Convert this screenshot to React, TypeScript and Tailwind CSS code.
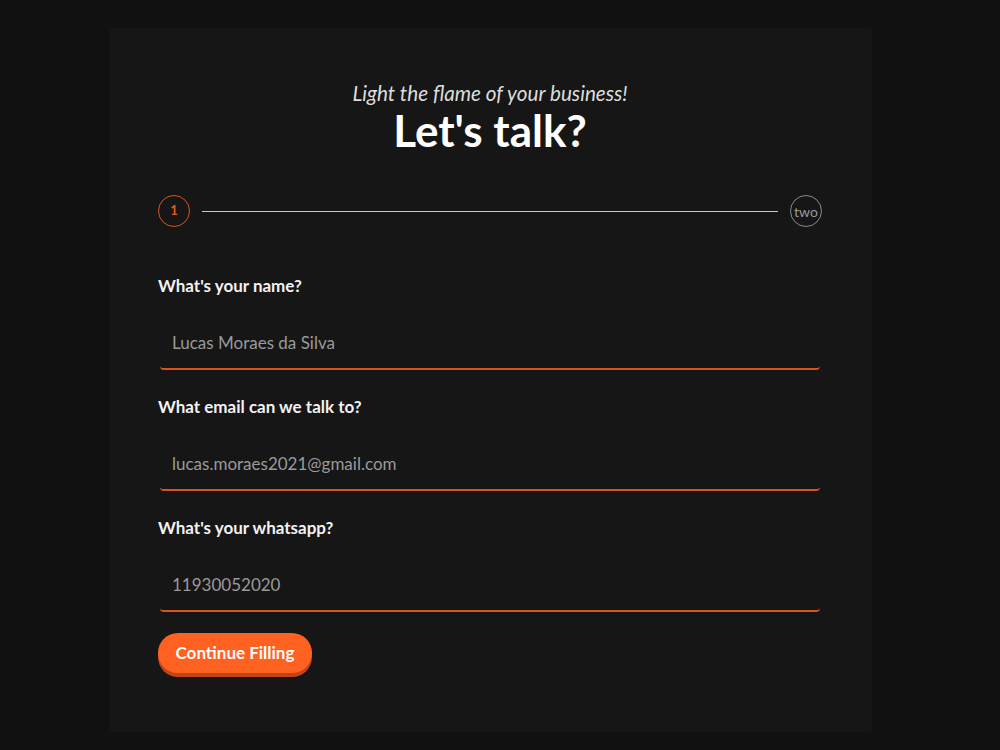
import React from "react";

const fields = [
  { label: "What's your name?", value: "Lucas Moraes da Silva" },
  { label: "What email can we talk to?", value: "lucas.moraes2021@gmail.com" },
  { label: "What's your whatsapp?", value: "11930052020" },
];

export default function App() {
  return (
    <div
      className="min-h-[750px] w-full bg-[#111111] pt-[28px] pb-[18px]"
      style={{ fontFamily: "Lato, 'Open Sans', sans-serif" }}
    >
      <div className="ml-[110px] w-[762px] h-[704px] rounded-[4px] bg-[#161616] pl-[48px] pr-[50px] pt-[53px]">
        <div className="flex flex-col items-center">
          <p className="text-[20.7px] leading-[24px] italic text-[#dddddd]">
            Light the flame of your business!
          </p>
          <h1 className="text-[44px] leading-[50px] font-bold text-white">Let's talk?</h1>
        </div>

        <div className="mt-[40px] flex items-center">
          <div className="flex h-[32px] w-[32px] items-center justify-center rounded-full border-[1.5px] border-[#d9531e] text-[13px] font-bold text-[#e05a22]">
            1
          </div>
          <div className="mx-[12px] h-px flex-1 bg-[#c7c7c7]" />
          <div className="flex h-[32px] w-[32px] items-center justify-center rounded-full border-[1.5px] border-[#8a8a8a] text-[14px] text-[#9a9a9a]">
            two
          </div>
        </div>

        <form className="mt-[50px] flex flex-col">
          {fields.map((f, i) => (
            <div key={f.label} className={i > 0 ? "mt-[28px]" : ""}>
              <label className="block text-[17px] leading-[18px] font-bold text-[#f2f2f2]">
                {f.label}
              </label>
              <div className="mx-[2px] mt-[22px] h-[53px] rounded-[4px] border-b-2 border-solid border-b-[#d9531e]">
                <input
                  readOnly
                  value={f.value}
                  className="block h-[51px] w-full bg-transparent pl-[12px] text-[17px] text-[#9a9a9a] outline-none"
                  style={{ fontFamily: "Lato, 'Open Sans', sans-serif" }}
                />
              </div>
            </div>
          ))}

          <button
            type="button"
            className="mt-[21px] h-[40px] w-[154px] rounded-full bg-[#ff6120] text-[17px] font-bold text-white shadow-[0_4px_0_#c2451a]"
            style={{ fontFamily: "Lato, 'Open Sans', sans-serif" }}
          >
            Continue Filling
          </button>
        </form>
      </div>
    </div>
  );
}
